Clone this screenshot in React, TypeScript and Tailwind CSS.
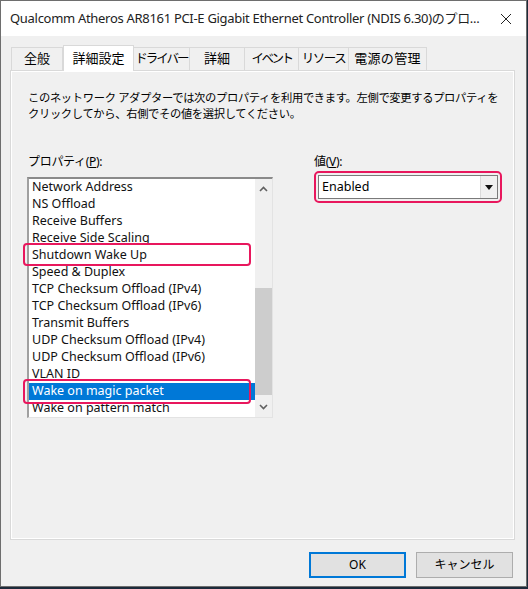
import React from "react"

const items = [
  "Network Address",
  "NS Offload",
  "Receive Buffers",
  "Receive Side Scaling",
  "Shutdown Wake Up",
  "Speed & Duplex",
  "TCP Checksum Offload (IPv4)",
  "TCP Checksum Offload (IPv6)",
  "Transmit Buffers",
  "UDP Checksum Offload (IPv4)",
  "UDP Checksum Offload (IPv6)",
  "VLAN ID",
  "Wake on magic packet",
  "Wake on pattern match",
]

// label, width, text style
const tabs = [
  { label: "全般", cls: "w-[52px] text-[13px]" },
  { label: "詳細設定", cls: "w-[71px] text-[13px]" },
  { label: "ドライバー", cls: "w-[57px] text-[12.5px] tracking-[-2px]" },
  { label: "詳細", cls: "w-[56px] text-[13px]" },
  { label: "イベント", cls: "w-[55px] text-[12.5px] tracking-[-2.5px]" },
  { label: "リソース", cls: "w-[51px] text-[12.5px] tracking-[-1.5px]" },
  { label: "電源の管理", cls: "w-[79px] text-[13px] tracking-[0.3px]" },
]

function Chevron({ up }: { up?: boolean }) {
  return (
    <svg width="9" height="6" viewBox="0 0 9 6">
      <path
        d={up ? "M1 5 L4.5 1.5 L8 5" : "M1 1 L4.5 4.5 L8 1"}
        fill="none"
        stroke="#606060"
        strokeWidth="1.6"
      />
    </svg>
  )
}

export default function App() {
  return (
    <div className="w-[528px] h-[589px] bg-[#1d2a3a] font-['Noto_Sans','Noto_Sans_CJK_JP',sans-serif] text-black">
      <div className="w-[527px] h-[587px] border border-[#6e6e6e] bg-[#f0f0f0] flex flex-col">
        {/* title bar */}
        <div className="h-[35px] bg-white flex items-center justify-between pl-[9px] pr-[14px]">
          <span className="text-[13px] tracking-[-0.3px] text-[#222] whitespace-nowrap">
            Qualcomm Atheros AR8161 PCI-E Gigabit Ethernet Controller (NDIS 6.30)のプロ...
          </span>
          <svg width="12" height="12" viewBox="0 0 12 12">
            <path d="M1 1 L11 11 M11 1 L1 11" stroke="#222" strokeWidth="1" />
          </svg>
        </div>

        {/* tabs */}
        <div className="flex items-end pl-[10px] h-[34px]">
          {tabs.map((t, i) =>
            i === 1 ? (
              <div
                key={t.label}
                className={`${t.cls} h-[26px] bg-white border border-b-0 border-[#d9d9d9] -mb-px relative z-10 flex items-center justify-center whitespace-nowrap`}
              >
                {t.label}
              </div>
            ) : (
              <div
                key={t.label}
                className={`${t.cls} h-[23px] bg-[#f0f0f0] border border-b-0 border-[#d9d9d9] -ml-px first:ml-0 flex items-center justify-center whitespace-nowrap`}
              >
                {t.label}
              </div>
            )
          )}
        </div>

        {/* panel */}
        <div className="ml-[9px] mr-[11px] h-[470px] border border-[#d9d9d9] bg-[#f0f0f0] relative">
          <div className="absolute inset-0 border border-white pointer-events-none" />
          <div className="pl-[17px] pt-[19px] pr-[10px] text-[11.3px] leading-[16px] tracking-[-0.35px] whitespace-nowrap">
            <p>このネットワーク アダプターでは次のプロパティを利用できます。左側で変更するプロパティを</p>
            <p>クリックしてから、右側でその値を選択してください。</p>
          </div>

          <div className="flex pl-[16px] pt-[32px]">
            {/* properties */}
            <div className="w-[246px]">
              <div className="text-[12px] leading-[16px] pl-[1px] tracking-[-0.3px]">
                プロパティ(<span className="underline">P</span>):
              </div>
              <div className="relative mt-[7px] h-[241px] border-t-2 border-l-2 border-t-[#8a8a8a] border-l-[#a0a0a0] border-r border-b border-r-[#e3e3e3] border-b-[#e3e3e3] bg-white flex">
                <div className="flex-1 overflow-hidden">
                  {items.map((it) => {
                    const sel = it === "Wake on magic packet"
                    return (
                      <div
                        key={it}
                        className={`h-[17px] pl-[3px] text-[12.5px] leading-[15px] whitespace-nowrap ${
                          sel ? "bg-[#0078d7] text-white" : "text-[#111]"
                        }`}
                      >
                        {it}
                      </div>
                    )
                  })}
                </div>
                <div className="w-[17px] bg-[#f0f0f0] flex flex-col items-center">
                  <div className="h-[20px] flex items-center justify-center">
                    <Chevron up />
                  </div>
                  <div className="flex-1 w-full flex flex-col">
                    <div className="h-[89px]" />
                    <div className="h-[107px] w-full bg-[#cdcdcd]" />
                  </div>
                  <div className="h-[20px] flex items-center justify-center">
                    <Chevron />
                  </div>
                </div>

                {/* annotation frames */}
                <div className="absolute left-[-6px] top-[64px] w-[228px] h-[23px] border-2 border-[#e8175d] rounded-[4px]" />
                <div className="absolute left-[-6px] top-[200px] w-[228px] h-[25px] border-2 border-[#e8175d] rounded-[4px]" />
              </div>
            </div>

            {/* value */}
            <div className="ml-[41px]">
              <div className="text-[12px] leading-[16px] tracking-[-0.3px]">
                値(<span className="underline">V</span>):
              </div>
              <div className="mt-[1px] w-[188px] h-[32px] border-2 border-[#e8175d] rounded-[5px] p-[2px]">
                <div className="h-full border border-[#7a7a7a] bg-white flex items-center">
                  <div className="flex-1 pl-[3px] text-[12.5px]">Enabled</div>
                  <div className="w-[17px] h-full bg-[#f0f0f0] border-l border-[#dadada] flex items-center justify-center">
                    <svg width="8" height="5" viewBox="0 0 8 5">
                      <path d="M0 0 H8 L4 5 Z" fill="#111" />
                    </svg>
                  </div>
                </div>
              </div>
            </div>
          </div>
        </div>

        {/* buttons */}
        <div className="flex justify-end gap-[10px] pr-[13px] pt-[12px]">
          <button className="w-[97px] h-[26px] border-2 border-[#0078d7] bg-[#e1e1e1] text-[12px]">OK</button>
          <button className="w-[97px] h-[26px] border border-[#adadad] bg-[#e1e1e1] text-[12px]">キャンセル</button>
        </div>
      </div>
    </div>
  )
}
